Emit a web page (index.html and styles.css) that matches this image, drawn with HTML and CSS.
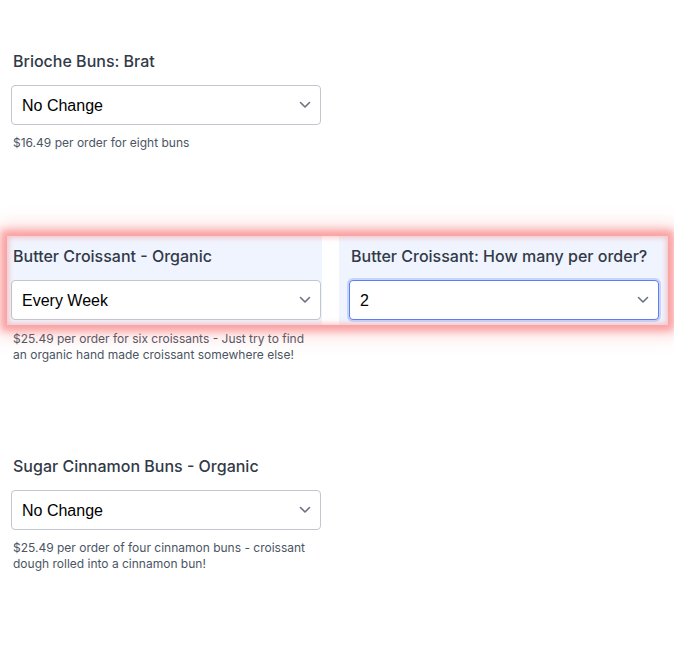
FILE: index.html
```html
<!DOCTYPE html>
<html>
<head>
<meta charset="utf-8">
<link rel="stylesheet" href="styles.css">
</head>
<body>
<div class="page">
  <div class="field first">
    <label class="label">Brioche Buns: Brat</label>
    <div class="select-wrap">
      <select class="select"><option>No Change</option></select>
      <svg class="chev" viewBox="0 0 12 8" width="12" height="8"><path d="M1.5 1.5 L6 6 L10.5 1.5" fill="none" stroke="#6b7280" stroke-width="1.6" stroke-linecap="round" stroke-linejoin="round"/></svg>
    </div>
    <p class="help">$16.49 per order for eight buns</p>
  </div>

  <div class="row">
    <div class="cell left">
      <label class="label">Butter Croissant - Organic</label>
      <div class="select-wrap">
        <select class="select"><option>Every Week</option></select>
        <svg class="chev" viewBox="0 0 12 8" width="12" height="8"><path d="M1.5 1.5 L6 6 L10.5 1.5" fill="none" stroke="#6b7280" stroke-width="1.6" stroke-linecap="round" stroke-linejoin="round"/></svg>
      </div>
    </div>
    <div class="cell right">
      <label class="label">Butter Croissant: How many per order?</label>
      <div class="select-wrap">
        <select class="select focus"><option>2</option></select>
        <svg class="chev" viewBox="0 0 12 8" width="12" height="8"><path d="M1.5 1.5 L6 6 L10.5 1.5" fill="none" stroke="#6b7280" stroke-width="1.6" stroke-linecap="round" stroke-linejoin="round"/></svg>
      </div>
    </div>
  </div>
  <div class="field after-row">
    <p class="help">$25.49 per order for six croissants - Just try to find an organic hand made croissant somewhere else!</p>
  </div>

  <div class="field third">
    <label class="label">Sugar Cinnamon Buns - Organic</label>
    <div class="select-wrap">
      <select class="select"><option>No Change</option></select>
      <svg class="chev" viewBox="0 0 12 8" width="12" height="8"><path d="M1.5 1.5 L6 6 L10.5 1.5" fill="none" stroke="#6b7280" stroke-width="1.6" stroke-linecap="round" stroke-linejoin="round"/></svg>
    </div>
    <p class="help">$25.49 per order of four cinnamon buns - croissant dough rolled into a cinnamon bun!</p>
  </div>
</div>
</body>
</html>
```
FILE: styles.css
```css
html, body {
  margin: 0;
  padding: 0;
  background: #ffffff;
}
.page {
  padding-top: 49px;
  font-family: Inter, "Noto Sans", sans-serif;
}
.field {
  width: 310px;
  margin-left: 11px;
}
.label {
  display: block;
  padding-left: 2px;
  font-size: 16px;
  line-height: 24px;
  font-weight: 500;
  color: #323a48;
  margin-bottom: 12px;
  white-space: nowrap;
}
.select-wrap {
  position: relative;
  width: 310px;
  height: 40px;
}
.select {
  -webkit-appearance: none;
  appearance: none;
  display: block;
  box-sizing: border-box;
  width: 310px;
  height: 40px;
  margin: 0;
  padding: 0 30px 0 10px;
  border: 1px solid #c3c6ce;
  border-radius: 4px;
  background: #ffffff;
  font-family: "Liberation Sans", Arial, sans-serif;
  font-size: 16px;
  color: #000000;
  outline: none;
}
.select.focus {
  border-color: #5b7ef2;
  box-shadow: 0 0 0 2px rgba(165, 185, 250, 0.55);
}
.chev {
  position: absolute;
  right: 10px;
  top: 16px;
  pointer-events: none;
}
.help {
  margin: 10px 0 0 0;
  padding-left: 2px;
  font-size: 12px;
  line-height: 16px;
  color: #4b5563;
}
.first {
  margin-bottom: 85px;
}
.row {
  position: relative;
  display: grid;
  grid-template-columns: 315px 329px;
  column-gap: 17px;
  width: 661px;
  margin-left: 7px;
  background: #ffffff;
  box-shadow: 0 0 7px 6px rgba(248, 113, 113, 0.55), 0 0 18px 9px rgba(248, 113, 113, 0.3);
}
.row::after {
  content: "";
  position: absolute;
  inset: 0;
  pointer-events: none;
  box-shadow: inset 0 0 5px 2px rgba(248, 113, 113, 0.35);
}
.cell {
  background: #f0f4fe;
  padding-top: 8px;
  padding-bottom: 5px;
}
.cell.left {
  padding-left: 4px;
  padding-right: 1px;
}
.cell.right {
  padding-left: 10px;
  padding-right: 9px;
}
.after-row .help {
  margin-top: 6px;
}
.third {
  margin-top: 91px;
}
```
